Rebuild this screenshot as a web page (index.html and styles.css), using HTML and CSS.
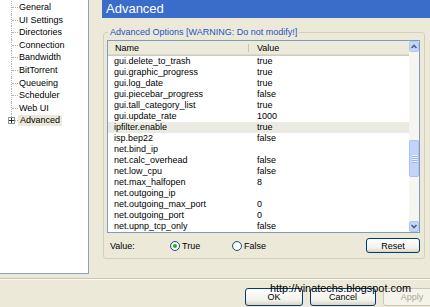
FILE: index.html
```html
<!DOCTYPE html>
<html lang="en">
<head>
  <meta charset="UTF-8" />
  <title>Preferences - Advanced</title>
  <link rel="stylesheet" href="styles.css">
</head>
<body>

  <div class="main">
    <!-- Category tree -->
    <div class="tree">
      <ul class="tree-list">
        <li>General</li>
        <li>UI Settings</li>
        <li>Directories</li>
        <li>Connection</li>
        <li>Bandwidth</li>
        <li>BitTorrent</li>
        <li>Queueing</li>
        <li>Scheduler</li>
        <li>Web UI</li>
        <li class="last">
          <span class="expander">
            <svg width="5" height="5" viewBox="0 0 5 5"><path d="M0 2.5H5M2.5 0V5" stroke="#2a2a2a" stroke-width="1"/></svg>
          </span>
          <span class="sel">Advanced</span>
        </li>
      </ul>
    </div>

    <!-- Advanced page -->
    <div class="pane">
      <div class="pane-title">Advanced</div>

      <fieldset class="group">
        <legend>Advanced Options [WARNING: Do not modify!]</legend>

        <div class="listview">
          <div class="lv-body">
            <div class="lv-head">
              <span class="c-name">Name</span>
              <span class="c-val">Value</span>
            </div>
            <div class="lv-row"><span class="c-name">gui.delete_to_trash</span><span class="c-val">true</span></div>
            <div class="lv-row"><span class="c-name">gui.graphic_progress</span><span class="c-val">true</span></div>
            <div class="lv-row"><span class="c-name">gui.log_date</span><span class="c-val">true</span></div>
            <div class="lv-row"><span class="c-name">gui.piecebar_progress</span><span class="c-val">false</span></div>
            <div class="lv-row"><span class="c-name">gui.tall_category_list</span><span class="c-val">true</span></div>
            <div class="lv-row"><span class="c-name">gui.update_rate</span><span class="c-val">1000</span></div>
            <div class="lv-row hl"><span class="c-name">ipfilter.enable</span><span class="c-val">true</span></div>
            <div class="lv-row"><span class="c-name">isp.bep22</span><span class="c-val">false</span></div>
            <div class="lv-row"><span class="c-name">net.bind_ip</span><span class="c-val"></span></div>
            <div class="lv-row"><span class="c-name">net.calc_overhead</span><span class="c-val">false</span></div>
            <div class="lv-row"><span class="c-name">net.low_cpu</span><span class="c-val">false</span></div>
            <div class="lv-row"><span class="c-name">net.max_halfopen</span><span class="c-val">8</span></div>
            <div class="lv-row"><span class="c-name">net.outgoing_ip</span><span class="c-val"></span></div>
            <div class="lv-row"><span class="c-name">net.outgoing_max_port</span><span class="c-val">0</span></div>
            <div class="lv-row"><span class="c-name">net.outgoing_port</span><span class="c-val">0</span></div>
            <div class="lv-row"><span class="c-name">net.upnp_tcp_only</span><span class="c-val">false</span></div>
          </div>

          <div class="vscroll">
            <div class="sb-btn">
              <svg width="8" height="9" viewBox="0 0 8 9"><path d="M1.5 6L4 3.5L6.5 6" fill="none" stroke="#4d6185" stroke-width="1.6"/></svg>
            </div>
            <div class="sb-track">
              <div class="sb-thumb" style="margin-top:88px;height:37px">
                <span></span><span></span><span></span><span></span>
              </div>
            </div>
            <div class="sb-btn">
              <svg width="8" height="9" viewBox="0 0 8 9"><path d="M1.5 3L4 5.5L6.5 3" fill="none" stroke="#4d6185" stroke-width="1.6"/></svg>
            </div>
          </div>
        </div>

        <div class="value-row">
          <span class="value-label">Value:</span>
          <label class="radio first"><span class="radio-dot checked"></span>True</label>
          <label class="radio"><span class="radio-dot"></span>False</label>
          <button class="xp-btn reset">Reset</button>
        </div>
      </fieldset>
    </div>
  </div>

  <!-- Dialog buttons -->
  <div class="footer">
    <button class="xp-btn ok">OK</button>
    <button class="xp-btn cancel">Cancel</button>
    <button class="xp-btn apply" disabled>Apply</button>
    <div class="watermark">http://vinatechs.blogspot.com</div>
  </div>

</body>
</html>
```

FILE: styles.css
```css
* {
  box-sizing: border-box;
}
html, body {
  margin: 0;
}
body {
  width: 430px;
  height: 307px;
  overflow: hidden;
  background: #ece9d8;
  font-family: "Liberation Sans", Arial, sans-serif;
  font-size: 9px;
  color: #000;
}
.main {
  display: flex;
  height: 274px;
}

/* tree */
.tree {
  width: 89px;
  flex-shrink: 0;
  background: #fff;
  border-right: 1px solid #8fa4bb;
  border-bottom: 1px solid #8fa4bb;
  padding-top: 1px;
}
.tree-list {
  list-style: none;
  margin: 0;
  padding: 0;
}
.tree-list li {
  position: relative;
  height: 12.6px;
  line-height: 12.6px;
  padding-left: 19px;
  white-space: nowrap;
}
.tree-list li::before {
  content: "";
  position: absolute;
  left: 11px;
  top: 0;
  bottom: 0;
  border-left: 1px dotted #b0b0b0;
}
.tree-list li::after {
  content: "";
  position: absolute;
  left: 12px;
  width: 6px;
  top: 6px;
  border-top: 1px dotted #b0b0b0;
}
.tree-list li.last::before {
  bottom: 6px;
}
.expander {
  position: absolute;
  left: 8px;
  top: 3px;
  width: 7px;
  height: 7px;
  border: 1px solid #8c98a0;
  background: #fff;
  z-index: 1;
  display: flex;
  align-items: center;
  justify-content: center;
}
.expander svg {
  display: block;
}
.sel {
  display: inline-block;
  line-height: 11px;
  background: #ece9d8;
  padding: 0 2px;
  margin-left: -1px;
}

/* right pane */
.pane {
  flex: 1;
  margin-left: 13px;
  display: flex;
  flex-direction: column;
}
.pane-title {
  height: 18px;
  background: #3a6cca;
  color: #fff;
  font-size: 13px;
  line-height: 18px;
  padding-left: 4px;
}
.group {
  margin: 9px 5px 0 1px;
  padding: 2px 4px 5px 3px;
  border: 1px solid #d0d0bf;
  border-radius: 3px;
  min-width: 0;
}
.group legend {
  margin-left: 1px;
  padding: 0 2px;
  line-height: 11px;
  color: #1f50c8;
}

/* list view */
.listview {
  display: flex;
  height: 193px;
  border: 1px solid #7f9db9;
  background: #fff;
}
.lv-body {
  flex: 1;
  overflow: hidden;
}
.lv-head {
  display: flex;
  height: 15px;
  line-height: 14px;
  background: #ebeadb;
  box-shadow: inset 0 -1px #d0ccbd, inset 0 -2px #dcd8c8;
}
.lv-head .c-name {
  position: relative;
  padding-left: 7px;
}
.lv-head .c-name::after {
  content: "";
  position: absolute;
  right: 0;
  top: 3px;
  bottom: 4px;
  border-right: 1px solid #c7c5b2;
}
.lv-row {
  display: flex;
  height: 11px;
  line-height: 11px;
  white-space: nowrap;
}
.lv-row.hl {
  background: #ecebe3;
}
.c-name {
  width: 141px;
  flex-shrink: 0;
  padding-left: 6px;
}
.c-val {
  padding-left: 8px;
}

/* scrollbar */
.vscroll {
  width: 10px;
  display: flex;
  flex-direction: column;
  background: #f6f5f0;
}
.sb-btn {
  height: 11px;
  background: #c6d6fb;
  border: 1px solid #b4c6f0;
  border-radius: 2px;
  display: flex;
  align-items: center;
  justify-content: center;
}
.sb-btn svg {
  display: block;
}
.sb-track {
  flex: 1;
}
.sb-thumb {
  background: #c3d4fc;
  border: 1px solid #aec2ee;
  border-radius: 2px;
  display: flex;
  flex-direction: column;
  align-items: center;
  justify-content: center;
  gap: 1px;
}
.sb-thumb span {
  width: 5px;
  height: 1px;
  background: #eef3ff;
  box-shadow: 0 1px #9fb4e6;
}

/* value row */
.value-row {
  display: flex;
  align-items: center;
  height: 15px;
  margin-top: 5px;
  padding-left: 3px;
}
.value-label {
  width: 60px;
}
.radio {
  display: flex;
  align-items: center;
  gap: 2px;
}
.radio.first {
  width: 62px;
}
.radio-dot {
  width: 10px;
  height: 10px;
  border: 1px solid #1c5180;
  border-radius: 50%;
  background: radial-gradient(circle at 60% 60%, #fff 40%, #dcdad0);
  display: flex;
  align-items: center;
  justify-content: center;
}
.radio-dot.checked::after {
  content: "";
  width: 4px;
  height: 4px;
  border-radius: 50%;
  background: #2ca52c;
}

/* buttons */
.xp-btn {
  height: 15px;
  padding: 0;
  border: 1px solid #003c74;
  border-radius: 3px;
  background: linear-gradient(#ffffff, #f2f1ea 70%, #d9d5c8);
  font-family: "Liberation Sans", Arial, sans-serif;
  font-size: 9px;
  color: #000;
}
.reset {
  width: 54px;
  margin-left: auto;
}
.footer {
  position: relative;
  display: flex;
  margin-top: 4px;
  padding: 9px 0 0 245px;
  border-top: 1px solid #c9c5b3;
  box-shadow: inset 0 1px #fbfaf6;
  height: 33px;
}
.footer .xp-btn {
  height: 18px;
  margin-right: 7px;
  flex-shrink: 0;
}
.ok {
  width: 58px;
}
.cancel {
  width: 66px;
}
.apply {
  width: 58px;
  border-color: #c9c7ba;
  background: #f5f4ea;
  color: #aca899;
}
.watermark {
  position: absolute;
  left: 270px;
  top: 3px;
  font-size: 10.9px;
  line-height: 12px;
  color: #000;
  white-space: nowrap;
}
```
